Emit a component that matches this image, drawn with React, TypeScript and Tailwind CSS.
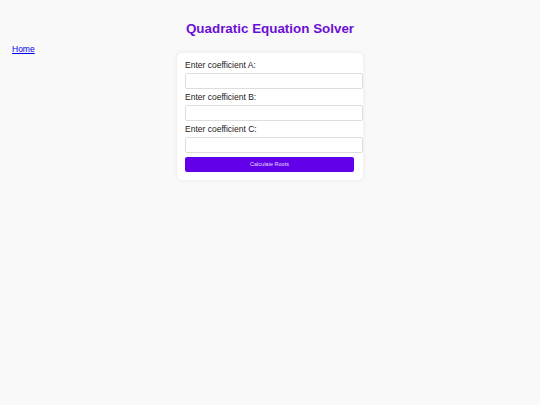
export default function App() {
  const labels = ["Enter coefficient A:", "Enter coefficient B:", "Enter coefficient C:"];
  return (
    <div className="min-h-[405px] w-full bg-[#f9f9f9] font-['Liberation_Sans',Arial,sans-serif] text-[#222]">
      <h1 className="pt-[20px] text-center text-[13.4px] font-bold leading-[18px] text-[#6c0fd6]">
        Quadratic Equation Solver
      </h1>
      <div className="h-[9px] px-[12px] mt-[6px] pt-[1px] text-[8.5px] leading-[9px]">
        <a href="#" className="text-[#0000ee] underline">
          Home
        </a>
      </div>
      <div className="flex justify-center">
        <div className="w-[186px] rounded-[5px] bg-white px-[8px] pt-[7px] pb-[8px] shadow-[0_0_5px_rgba(0,0,0,0.08)]">
          {labels.map((l, i) => (
            <div key={l} className={i === 0 ? "" : "mt-[3px]"}>
              <div className="text-[8.5px] leading-[10px] text-[#222]">{l}</div>
              <input className="mt-[3px] block h-[16px] w-[178px] rounded-[2px] border border-[#dddddd] bg-white" />
            </div>
          ))}
          <button className="mt-[4px] block h-[15px] w-[169px] rounded-[2px] bg-[#6200ea] text-[5.5px] leading-[15px] text-[#e8d8ff]">
            Calculate Roots
          </button>
        </div>
      </div>
    </div>
  );
}
